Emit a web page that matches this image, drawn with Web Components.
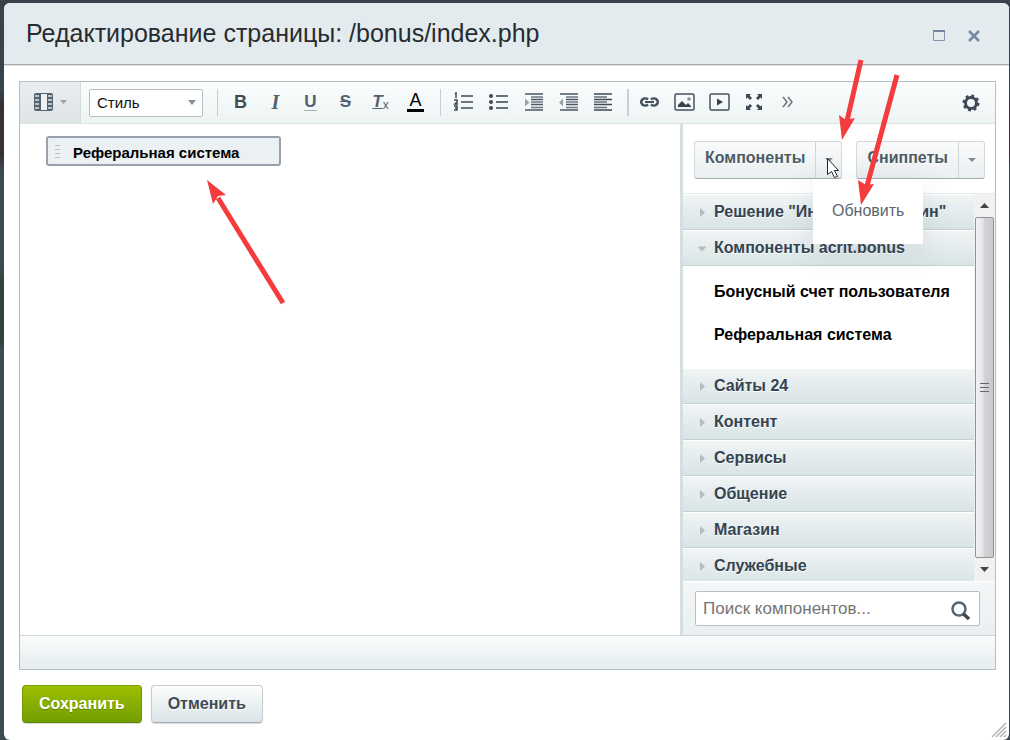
<!DOCTYPE html>
<html lang="ru">
<head>
<meta charset="utf-8">
<meta name="viewport" content="width=device-width, initial-scale=1">
<title>Редактирование страницы: /bonus/index.php</title>
<style>
    html, body {
        height: 100%;
        margin: 0;
    }
    body {
        position: relative;
        box-sizing: border-box;
        padding: 3px 1px 0 4px;
        background: linear-gradient(#3b424c 0, #37444c 90px, #382f38 105px, #382f38 155px, #3d4a50 170px, #3d4a50 270px, #2f423c 285px, #2f423c 340px, #3d4a52 350px, #3d4a52 100%);
        font-family: "Liberation Sans", Arial, sans-serif;
        overflow: hidden;
    }
</style>
</head>
<body>
<dialog-window heading="Редактирование страницы: /bonus/index.php">
    <html-editor>
        <editor-toolbar slot="toolbar"></editor-toolbar>
        <component-chip slot="content">Реферальная система</component-chip>
        <component-panel slot="panel">
            <split-button slot="tabs" open>Компоненты<button type="button" slot="menu">Обновить</button></split-button>
            <split-button slot="tabs">Сниппеты</split-button>
            <accordion-item heading='Решение "Интернет-магазин"'></accordion-item>
            <accordion-item heading="Компоненты acrit.bonus" open>
                <a href="#">Бонусный счет пользователя</a>
                <a href="#">Реферальная система</a>
            </accordion-item>
            <accordion-item heading="Сайты 24"></accordion-item>
            <accordion-item heading="Контент"></accordion-item>
            <accordion-item heading="Сервисы"></accordion-item>
            <accordion-item heading="Общение"></accordion-item>
            <accordion-item heading="Магазин"></accordion-item>
            <accordion-item heading="Служебные"></accordion-item>
        </component-panel>
    </html-editor>
    <push-button slot="actions" kind="save">Сохранить</push-button>
    <push-button slot="actions">Отменить</push-button>
</dialog-window>
<hint-arrows></hint-arrows>

<script>
// attach an open shadow root and fill it with the given markup
function render(element, html){
    const template = document.createElement('template');
    template.innerHTML = html;
    element.attachShadow({ mode: 'open' });
    element.shadowRoot.appendChild(template.content.cloneNode(true));
}

const ICONS = {
    film: `<rect x="1" y="1" width="19" height="18" rx="2" fill="#55636e"/><path d="M8 2h6v16H8z" fill="#eef1f3"/><path d="M2 3h4v2H2zM2 7h4v2H2zM2 11h4v2H2zM2 15h4v2H2zM15 3h4v2h-4zM15 7h4v2h-4zM15 11h4v2h-4zM15 15h4v2h-4z" fill="#b9c0c6"/>`,
    ordered: `<path d="M8 4h12M8 10h12M8 16h12" stroke="#6b7780" stroke-width="2"/><path d="M2 2l1-1v5M1 8h3v2l-2 2h3M1 14h3v4H1M2 16h2" fill="none" stroke="#3b4a56" stroke-width="1.5"/>`,
    bullets: `<path d="M8 4h12M8 10h12M8 16h12" stroke="#65727c" stroke-width="2"/><circle cx="3" cy="4" r="2" fill="#3b4a56"/><circle cx="3" cy="10" r="2" fill="#3b4a56"/><circle cx="3" cy="16" r="2" fill="#3b4a56"/>`,
    indent: `<path d="M2 2h18M8 7.500h12M8 12.500h12M2 18h18" stroke="#4b5964" stroke-width="1.500"/><path d="M8 5h12M8 10h12M8 15.500h12" stroke="#6e7a84" stroke-width="1.500"/><path d="M2 6.500l4.500 4-4.500 4z" fill="#9ba4ab"/>`,
    outdent: `<path d="M2 2h18M8 7.500h12M8 12.500h12M2 18h18" stroke="#4b5964" stroke-width="1.500"/><path d="M8 5h12M8 10h12M8 15.500h12" stroke="#6e7a84" stroke-width="1.500"/><path d="M5 6.500l-4 4 4 4z" fill="#9ba4ab"/>`,
    align: `<path d="M1 2h18M1 7.500h18M1 12.500h18M1 18h18" stroke="#3f4d58" stroke-width="1.500"/><path d="M1 5h13M1 10h13M1 15.500h13" stroke="#65727c" stroke-width="1.500"/>`,
    link: `<path d="M9 7.500a4 3.500 0 1 0 0 5M12 7.500a4 3.500 0 1 1 0 5" fill="none" stroke="#45535e" stroke-width="2.500"/><path d="M6 10h9" stroke="#45535e" stroke-width="2"/>`,
    image: `<rect x="1" y="2" width="19" height="16" rx="1.500" fill="none" stroke="#44525d" stroke-width="1.500"/><path d="M4 15v-2l4-4 4 4 2-2 3 3v1z" fill="#34434e"/><circle cx="15" cy="7" r="1.800" fill="#87929a"/>`,
    video: `<rect x="1" y="2" width="19" height="16" rx="1.500" fill="none" stroke="#44525d" stroke-width="1.500"/><path d="M8 6.500v7l6-3.500z" fill="#34434e"/>`,
    full: `<path d="M2 2h5L5.500 3.500l2.500 2.500-2 2-2.500-2.500L2 7zM18 2v5l-1.500-1.500L14 8l-2-2 2.500-2.500L13 2zM2 18v-5l1.500 1.500L6 12l2 2-2.500 2.500L7 18zM18 18h-5l1.500-1.500L12 14l2-2 2.500 2.500L18 13z" fill="#3a4954"/>`,
    more: `<path d="M4 5l4 5-4 5M9 5l4 5-4 5" fill="none" stroke="#6a7680" stroke-width="1.500"/>`,
    gear: `<circle cx="10" cy="10" r="7" fill="none" stroke="#3d4b56" stroke-width="3" stroke-dasharray="2.750 2.748"/><circle cx="10" cy="10" r="5.500" fill="none" stroke="#3d4b56" stroke-width="3"/>`,
    search: `<circle cx="9" cy="8" r="6.500" fill="none" stroke="#566571" stroke-width="2.500"/><path d="M13.500 13l5.500 5" stroke="#3a4954" stroke-width="3.500"/>`
};

function icon(name){
    return `<svg width="21" height="20" viewBox="0 0 21 20" aria-hidden="true">${ICONS[name]}</svg>`;
}

class DialogWindow extends HTMLElement {
    constructor(){
        super();
        render(this, `
        <style>
            :host{
                position: relative;
                display: flex;
                flex-direction: column;
                box-sizing: border-box;
                height: 100%;
                background: #fff;
                border-radius: 6px;
                overflow: hidden;
            }
            header{
                display: flex;
                align-items: center;
                gap: 21px;
                height: 61px;
                padding: 0 28px 0 22px;
                background: #e3ebee;
                border-bottom: 1px solid #a5abae;
                box-shadow: 0 1px 0 #dfe2e4;
            }
            h1{
                flex: 1;
                margin: 0;
                font-size: 25px;
                font-weight: normal;
                color: #282c2f;
            }
            header button{
                display: flex;
                margin-top: 4px;
                padding: 0;
                border: 0;
                background: none;
            }
            main{
                flex: 1;
                display: flex;
                min-height: 0;
                padding: 16px 13px 0 15px;
            }
            footer{
                display: flex;
                gap: 9px;
                padding: 15px 17px 17px 18px;
            }
            .resizer{
                position: absolute;
                right: 2px;
                bottom: 2px;
            }
        </style>
        <header>
            <h1></h1>
            <button type="button" aria-label="Развернуть"><svg width="14" height="14"><path d="M1.500 1.500h11v10h-11z" fill="none" stroke="#8594ae"/><path d="M1 2h12" stroke="#7383a0" stroke-width="2"/></svg></button>
            <button type="button" aria-label="Закрыть"><svg width="14" height="14"><path d="M2 2l10 10M12 2L2 12" stroke="#7686a2" stroke-width="2.500"/></svg></button>
        </header>
        <main><slot></slot></main>
        <footer><slot name="actions"></slot></footer>
        <svg class="resizer" width="16" height="16"><path d="M1 15L15 1M5 15L15 5M9 15l6-6M13 15l2-2" stroke="#b5b5b5" stroke-width="1.500"/></svg>
        `);
        this.shadowRoot.querySelector('h1').textContent = this.getAttribute('heading');
    }
}

class HtmlEditor extends HTMLElement {
    constructor(){
        super();
        render(this, `
        <style>
            :host{
                flex: 1;
                display: flex;
                flex-direction: column;
                min-width: 0;
                border: 1px solid #b4bfc6;
            }
            .work{
                flex: 1;
                display: flex;
                min-height: 0;
            }
            .content{
                flex: 1;
                min-width: 0;
                padding: 12px 26px;
            }
            .status{
                height: 33px;
                border-top: 1px solid #cfd5d9;
                background: linear-gradient(#f9fcfc, #e5edef);
            }
        </style>
        <slot name="toolbar"></slot>
        <div class="work">
            <div class="content"><slot name="content"></slot></div>
            <slot name="panel"></slot>
        </div>
        <div class="status"></div>
        `);
    }
}

class EditorToolbar extends HTMLElement {
    constructor(){
        super();
        render(this, `
        <style>
            :host{
                display: flex;
                align-items: center;
                height: 41px;
                border-bottom: 1px solid #dde2e4;
                background: linear-gradient(#fbfdfd, #edf3f3);
            }
            button{
                display: flex;
                flex: none;
                align-items: center;
                justify-content: center;
                box-sizing: border-box;
                width: 35px;
                height: 41px;
                padding: 0 0 2px;
                border: 0;
                background: none;
                font: bold 18px/20px "Liberation Sans", Arial, sans-serif;
                color: #3d4b57;
            }
            .view{
                gap: 6px;
                width: 61px;
                border-right: 1px solid #d5dadd;
                background: linear-gradient(#ebeef0, #dfe4e7);
            }
            .style{
                display: grid;
                align-items: center;
                width: 114px;
                height: 28px;
                margin: 0 7px 0 8px;
                box-sizing: border-box;
                border: 1px solid #b9bfc3;
                border-radius: 2px;
                background: #fff;
            }
            .style > *{
                grid-area: 1 / 1;
            }
            .style svg{
                justify-self: end;
                margin-right: 6px;
                pointer-events: none;
            }
            select{
                width: 100%;
                height: 26px;
                padding: 0 7px;
                border: 0;
                appearance: none;
                background: none;
                font: 15px "Liberation Sans", Arial, sans-serif;
                color: #111;
            }
            hr{
                flex: none;
                width: 1px;
                height: 27px;
                margin: 0 5px 0 7px;
                border: 0;
                background: #c9ced2;
            }
            .wide{
                width: 2px;
                margin: 0 3px 0 6px;
            }
            .i{
                font: italic bold 20px/20px "Liberation Serif", serif;
                color: #53616c;
            }
            .u span{
                line-height: 17px;
                border-bottom: 1px solid #a9b1b7;
            }
            .u, .s, .t{
                color: #53616c;
                font-size: 17px;
            }
            .s{
                text-decoration: line-through;
            }
            .t i{
                text-decoration: underline;
                text-decoration-thickness: 1px;
            }
            .t small{
                align-self: end;
                padding-bottom: 6px;
                font-size: 12px;
                font-weight: normal;
            }
            .a span{
                padding: 0 2px;
                border-bottom: 3px solid #000;
                font-weight: normal;
                line-height: 18px;
                color: #000;
            }
            .gear{
                margin-left: auto;
                margin-right: 6px;
                padding: 0;
            }
        </style>
        <button type="button" class="view" aria-label="Режим просмотра">${icon('film')}<svg width="7" height="4"><path d="M0 0h7l-3.500 4z" fill="#9aa2a8"/></svg></button>
        <div class="style">
            <select aria-label="Стиль"><option>Стиль</option></select>
            <svg width="8" height="5"><path d="M0 0h8L4 5z" fill="#83909b"/></svg>
        </div>
        <hr>
        <button type="button" class="b">B</button>
        <button type="button" class="i">I</button>
        <button type="button" class="u"><span>U</span></button>
        <button type="button" class="s">S</button>
        <button type="button" class="t"><i>T</i><small>x</small></button>
        <button type="button" class="a"><span>A</span></button>
        <hr>
        <button type="button" aria-label="Нумерованный список">${icon('ordered')}</button>
        <button type="button" aria-label="Список">${icon('bullets')}</button>
        <button type="button" aria-label="Увеличить отступ">${icon('indent')}</button>
        <button type="button" aria-label="Уменьшить отступ">${icon('outdent')}</button>
        <button type="button" aria-label="Выравнивание">${icon('align')}</button>
        <hr class="wide">
        <button type="button" aria-label="Ссылка">${icon('link')}</button>
        <button type="button" aria-label="Изображение">${icon('image')}</button>
        <button type="button" aria-label="Видео">${icon('video')}</button>
        <button type="button" aria-label="На весь экран">${icon('full')}</button>
        <button type="button" aria-label="Ещё">${icon('more')}</button>
        <button type="button" class="gear" aria-label="Настройки">${icon('gear')}</button>
        `);
    }
}

class ComponentChip extends HTMLElement {
    constructor(){
        super();
        render(this, `
        <style>
            :host{
                display: flex;
                align-items: center;
                gap: 13px;
                box-sizing: border-box;
                width: 235px;
                max-width: 100%;
                height: 30px;
                padding: 2px 7px 0;
                border: 2px solid #9a9fac;
                border-radius: 3px;
                background: #ebf0f2;
                font-size: 15px;
                font-weight: bold;
                color: #000;
            }
        </style>
        <svg width="5" height="14"><path d="M0 .5h5M0 4.500h5M0 8.500h5M0 12.500h5" stroke="#bcc2c5"/></svg>
        <span><slot></slot></span>
        `);
    }
}

class SplitButton extends HTMLElement {
    constructor(){
        super();
        render(this, `
        <style>
            :host{
                position: relative;
                display: flex;
                box-sizing: border-box;
                height: 38px;
                border: 1px solid #d3d8da;
                border-bottom-color: #a4abaf;
                border-radius: 3px;
                background: linear-gradient(#fafbfb, #e9eef0);
            }
            button{
                display: flex;
                align-items: center;
                justify-content: center;
                padding: 0 10px 4px;
                border: 0;
                background: none;
                font: bold 16px "Liberation Sans", Arial, sans-serif;
                color: #4d5b66;
                text-shadow: 0 1px 0 #fff;
            }
            .drop{
                width: 26px;
                padding: 0;
                border-left: 1px solid #d0d5d8;
            }
            .menu{
                position: absolute;
                z-index: 1;
                top: 37px;
                left: 118px;
                padding: 20px 19px 21px;
                background: #fff;
                box-shadow: 0 8px 30px rgba(60, 80, 90, .12);
            }
            :host(:not([open])) .menu{
                display: none;
            }
            ::slotted(button){
                display: block;
                padding: 0;
                border: 0;
                background: none;
                font: 16px/24px "Liberation Sans", Arial, sans-serif;
                color: #5b6570;
            }
        </style>
        <button type="button"><slot></slot></button>
        <button type="button" class="drop" aria-label="Меню"><svg width="8" height="4"><path d="M0 0h8L4 4z" fill="#7f8c96"/></svg></button>
        <div class="menu"><slot name="menu"></slot></div>
        `);
    }
}

class AccordionItem extends HTMLElement {
    constructor(){
        super();
        render(this, `
        <style>
            :host{
                display: block;
            }
            button{
                display: flex;
                align-items: center;
                gap: 8px;
                box-sizing: border-box;
                width: 100%;
                height: 36px;
                padding: 0 15px;
                border: 0;
                border-top: 1px solid #fff;
                border-bottom: 1px solid #c5d0d4;
                background: linear-gradient(#f0f4f5, #d9e4e6);
                font: bold 16px "Liberation Sans", Arial, sans-serif;
                color: #344450;
                text-shadow: 0 1px 0 #fff;
                white-space: nowrap;
            }
            svg{
                flex: none;
            }
            :host([open]) svg{
                transform: rotate(90deg);
            }
            .body{
                display: flex;
                flex-direction: column;
                gap: 19px;
                padding: 14px 31px 21px;
            }
            :host(:not([open])) .body{
                display: none;
            }
            ::slotted(a){
                font-size: 16px;
                line-height: 24px;
                font-weight: bold;
                color: #000;
                text-decoration: none;
                white-space: nowrap;
            }
        </style>
        <button type="button"><svg width="8" height="9"><path d="M2 0l5 4.500L2 9z" fill="#b4bcc0"/></svg><span></span></button>
        <div class="body"><slot></slot></div>
        `);
        this.shadowRoot.querySelector('span').textContent = this.getAttribute('heading');
    }
}

class ComponentPanel extends HTMLElement {
    constructor(){
        super();
        render(this, `
        <style>
            :host{
                display: flex;
                flex-direction: column;
                flex: none;
                width: 312px;
                border-left: 3px solid #d5dfe2;
            }
            .tabs{
                display: flex;
                justify-content: space-between;
                padding: 17px 10px 14px 11px;
                border-bottom: 1px solid #e4e9eb;
            }
            .tree{
                flex: 1;
                display: flex;
                min-height: 0;
            }
            .list{
                flex: 1;
                min-width: 0;
                overflow: hidden;
            }
            .scroll{
                display: flex;
                flex-direction: column;
                align-items: center;
                width: 19px;
                padding: 0 1px;
                background: #f1f1f2;
            }
            .scroll svg{
                flex: none;
                margin: 9px 0;
            }
            .thumb{
                flex: 1;
                display: flex;
                align-items: center;
                justify-content: center;
                box-sizing: border-box;
                width: 19px;
                border: 1px solid #919194;
                border-radius: 2px;
                background: linear-gradient(90deg, #f3f3f4, #e5e5e7 40%, #d3d3d7 50%, #c9c9ce);
            }
            form{
                padding: 9px 15px 9px 12px;
                border-top: 1px solid #fff;
                background: linear-gradient(#f4f6f7, #e9eff1);
            }
            .field{
                display: flex;
                align-items: center;
                box-sizing: border-box;
                height: 35px;
                padding: 0 8px 0 7px;
                border: 1px solid #b9bfc2;
                border-radius: 2px;
                background: #fff;
            }
            input{
                flex: 1;
                min-width: 0;
                padding: 0;
                border: 0;
                background: none;
                font: 17px "Liberation Sans", Arial, sans-serif;
            }
            input::placeholder{
                color: #757575;
            }
            .field button{
                display: flex;
                padding: 4px 0 0;
                border: 0;
                background: none;
            }
        </style>
        <div class="tabs"><slot name="tabs"></slot></div>
        <div class="tree">
            <div class="list"><slot></slot></div>
            <div class="scroll" aria-hidden="true">
                <svg width="9" height="5"><path d="M0 5h9L4.500 0z" fill="#444"/></svg>
                <div class="thumb"><svg width="9" height="11"><path d="M0 1.500h9M0 5.500h9M0 9.500h9" stroke="#66666a"/></svg></div>
                <svg width="9" height="5"><path d="M0 0h9L4.500 5z" fill="#444"/></svg>
            </div>
        </div>
        <form>
            <div class="field">
                <input type="text" aria-label="Поиск компонентов" placeholder="Поиск компонентов...">
                <button type="button" aria-label="Найти">${icon('search')}</button>
            </div>
        </form>
        `);
    }
}

class PushButton extends HTMLElement {
    constructor(){
        super();
        render(this, `
        <style>
            :host{
                display: block;
            }
            button{
                box-sizing: border-box;
                height: 38px;
                padding: 0 16px 1px;
                border: 1px solid #c6cccf;
                border-bottom-color: #a9b0b4;
                border-radius: 4px;
                background: linear-gradient(#fdfefe, #d9e3e6);
                box-shadow: 0 1px 1px rgba(0, 0, 0, .15);
                font: bold 16px "Liberation Sans", Arial, sans-serif;
                color: #3f4b54;
                text-shadow: 0 1px 0 #fff;
            }
            :host([kind="save"]) button{
                border-color: #7ba000 #6f9600 #5f8500;
                background: linear-gradient(#9dbf00, #729e00);
                color: #fff;
                text-shadow: 0 1px 0 #5f8500;
            }
        </style>
        <button type="button"><slot></slot></button>
        `);
    }
}

// red pointers and the mouse cursor drawn over the window
class HintArrows extends HTMLElement {
    constructor(){
        super();
        render(this, `
        <style>
            :host{
                position: absolute;
                top: 0;
                left: 0;
                z-index: 2;
                pointer-events: none;
            }
            svg{
                display: block;
            }
        </style>
        <svg width="920" height="320" aria-hidden="true">
            <path d="M827.500 158.500v16l4-3 3 6 3-1-3-6h4z" fill="#fff" stroke="#222233"/>
            <g fill="#f43c3c" stroke="#f43c3c">
                <path d="M861 60l-14 61M897 75l-30 111M283 303l-65-105" stroke-width="5"/>
                <path stroke="none" d="M842 140l-3-25 7 5 9-2zM861 205l-3-25 8 5 8-1zM207 180l19 15-8 1-5 8z"/>
            </g>
        </svg>
        `);
    }
}

customElements.define('dialog-window', DialogWindow);
customElements.define('html-editor', HtmlEditor);
customElements.define('editor-toolbar', EditorToolbar);
customElements.define('component-chip', ComponentChip);
customElements.define('split-button', SplitButton);
customElements.define('accordion-item', AccordionItem);
customElements.define('component-panel', ComponentPanel);
customElements.define('push-button', PushButton);
customElements.define('hint-arrows', HintArrows);
</script>
</body>
</html>
